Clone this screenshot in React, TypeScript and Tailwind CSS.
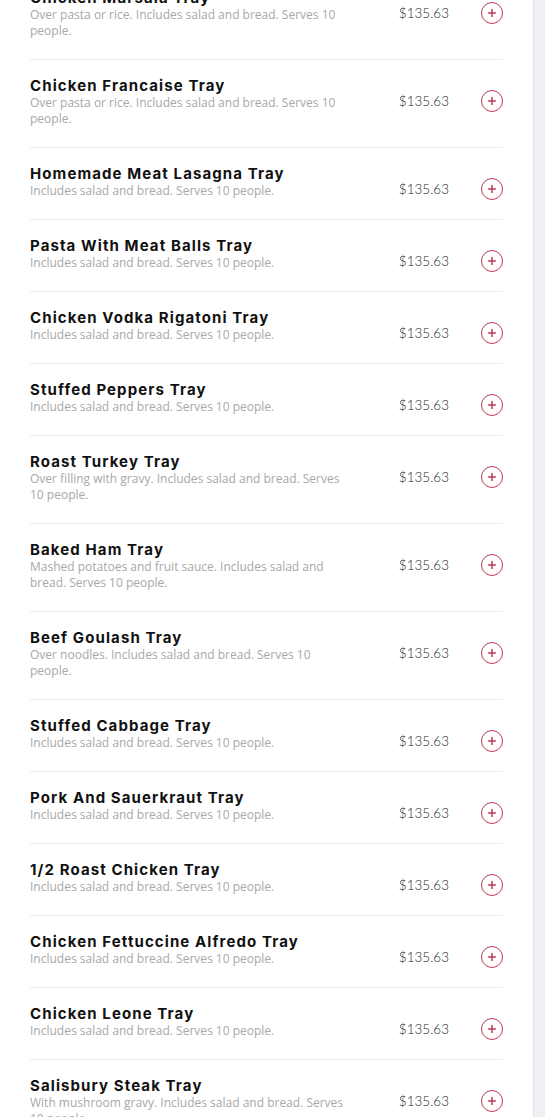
import React from "react";

type Item = { name: string; desc: string };

const items: Item[] = [
  { name: "Chicken Marsala Tray", desc: "Over pasta or rice. Includes salad and bread. Serves 10 people." },
  { name: "Chicken Francaise Tray", desc: "Over pasta or rice. Includes salad and bread. Serves 10 people." },
  { name: "Homemade Meat Lasagna Tray", desc: "Includes salad and bread. Serves 10 people." },
  { name: "Pasta With Meat Balls Tray", desc: "Includes salad and bread. Serves 10 people." },
  { name: "Chicken Vodka Rigatoni Tray", desc: "Includes salad and bread. Serves 10 people." },
  { name: "Stuffed Peppers Tray", desc: "Includes salad and bread. Serves 10 people." },
  { name: "Roast Turkey Tray", desc: "Over filling with gravy. Includes salad and bread. Serves 10 people." },
  { name: "Baked Ham Tray", desc: "Mashed potatoes and fruit sauce. Includes salad and bread. Serves 10 people." },
  { name: "Beef Goulash Tray", desc: "Over noodles. Includes salad and bread. Serves 10 people." },
  { name: "Stuffed Cabbage Tray", desc: "Includes salad and bread. Serves 10 people." },
  { name: "Pork And Sauerkraut Tray", desc: "Includes salad and bread. Serves 10 people." },
  { name: "1/2 Roast Chicken Tray", desc: "Includes salad and bread. Serves 10 people." },
  { name: "Chicken Fettuccine Alfredo Tray", desc: "Includes salad and bread. Serves 10 people." },
  { name: "Chicken Leone Tray", desc: "Includes salad and bread. Serves 10 people." },
  { name: "Salisbury Steak Tray", desc: "With mushroom gravy. Includes salad and bread. Serves 10 people." },
];

const AddButton = () => (
  <button className="flex h-[22px] w-[22px] items-center justify-center rounded-full border-[1.5px] border-[#bf3b55] text-[#bf3b55]">
    <svg width="10" height="10" viewBox="0 0 10 10" fill="none" stroke="currentColor" strokeWidth="1.5" strokeLinecap="round">
      <path d="M5 1.5v7M1.5 5h7" />
    </svg>
  </button>
);

const MenuRow = ({ item }: { item: Item }) => (
  <div className="flex items-start border-b border-[#ececec] pt-[17px] pb-[20px]">
    <div className="w-[316px]">
      <h3 className="text-[15px] font-bold leading-[18px] tracking-[1.1px] text-[#111]" style={{ fontFamily: "Inter, sans-serif" }}>
        {item.name}
      </h3>
      <p className="text-[12px] leading-[16px] text-[#a8a8a8]" style={{ fontFamily: "'Open Sans', sans-serif" }}>
        {item.desc}
      </p>
    </div>
    <div className="ml-auto mt-[13px] -mb-[1px] flex h-[22px] items-center gap-[32px]">
      <span className="text-[13.5px] font-light text-[#222]" style={{ fontFamily: "Lato, sans-serif" }}>
        $135.63
      </span>
      <AddButton />
    </div>
  </div>
);

export default function App() {
  return (
    <div className="flex h-[1117px] overflow-hidden bg-white">
      <div className="w-[533px] shrink-0 px-[30px]">
        <div className="-mt-[28px]">
          {items.map((item) => (
            <MenuRow key={item.name} item={item} />
          ))}
        </div>
      </div>
      <div className="flex-1 border-l border-[#e2e2e2] bg-[#eef0f4]" />
    </div>
  );
}
